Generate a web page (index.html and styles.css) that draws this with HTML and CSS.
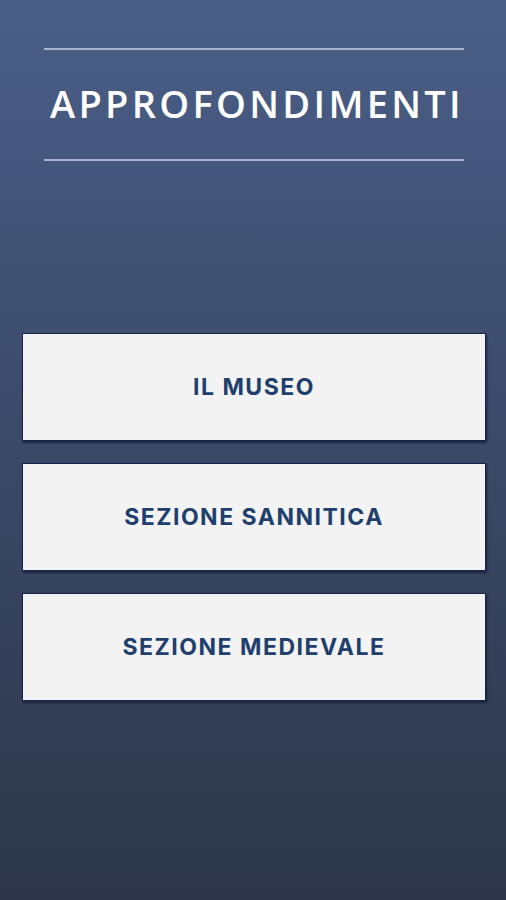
FILE: index.html
```html
<!DOCTYPE html>
<html lang="it">
<head>
    <meta charset="UTF-8">
    <title>Approfondimenti</title>
    <meta name="viewport" content="width=device-width, initial-scale=1.0">
    <link rel="stylesheet" href="styles.css">
</head>
<body>
    <div class="screen">
        <header class="page-head">
            <hr class="rule">
            <h1>APPROFONDIMENTI</h1>
            <hr class="rule">
        </header>
        <nav class="menu">
            <a class="menu-btn" href="#">IL MUSEO</a>
            <a class="menu-btn" href="#">SEZIONE SANNITICA</a>
            <a class="menu-btn" href="#">SEZIONE MEDIEVALE</a>
        </nav>
    </div>
</body>
</html>
```
FILE: styles.css
```css
:root {
    --top: #4a5e87;
    --mid: #3c4b6b;
    --bottom: #2d3648;
    --rule: #a8b4cb;
    --btn-bg: #f3f3f3;
    --btn-text: #213f6d;
    --btn-edge: #14244a;
}
html, body {
    margin: 0; padding: 0;
}
body {
    width: 506px;
    height: 900px;
    background: linear-gradient(180deg, var(--top) 0%, var(--mid) 45%, var(--bottom) 100%);
    font-family: 'Open Sans', Arial, sans-serif;
    overflow: hidden;
}
.screen {
    display: flex;
    flex-direction: column;
    padding-top: 48px;
}
.page-head {
    margin: 0 42px 0 44px;
    display: flex;
    flex-direction: column;
}
.rule {
    margin: 0;
    border: none;
    height: 2px;
    background: var(--rule);
}
.page-head h1 {
    margin: 0;
    height: 109px;
    line-height: 106px;
    color: #fff;
    font-size: 38px;
    font-weight: 600;
    letter-spacing: 3.3px;
    text-align: center;
    padding-left: 6px;
    white-space: nowrap;
}
.menu {
    display: flex;
    flex-direction: column;
    gap: 22px;
    margin: 172px 20px 0 22px;
}
.menu-btn {
    display: flex;
    align-items: center;
    justify-content: center;
    height: 106px;
    background: var(--btn-bg);
    border: 1px solid var(--btn-edge);
    box-shadow: 1px 2px 2px #0a1530aa;
    color: var(--btn-text);
    font-family: Inter, 'Liberation Sans', Arial, sans-serif;
    font-size: 23px;
    font-weight: 700;
    letter-spacing: 1.5px;
    text-decoration: none;
}
```
